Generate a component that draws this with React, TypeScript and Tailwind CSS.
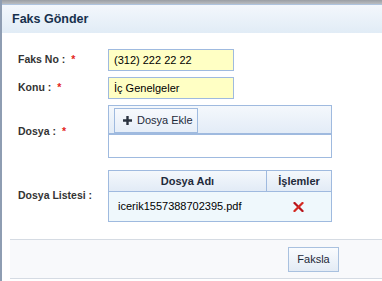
import React from "react";

const border = "border-[#9fbadf]";

function Label({ text, required }: { text: string; required?: boolean }) {
  return (
    <div className="w-[90px] shrink-0 text-[10.5px] font-bold text-[#333] flex items-center">
      <span>{text}</span>
      {required && <span className="ml-[6px] text-[#e3241b]">*</span>}
    </div>
  );
}

function TextInput({ value }: { value: string }) {
  return (
    <div
      className={`w-[126px] h-[22px] border ${border} bg-[#ffffc4] px-[5px] flex items-center text-[11px] text-black`}
    >
      {value}
    </div>
  );
}

function DeleteIcon() {
  return (
    <svg width="11" height="10" viewBox="0 0 11 10">
      <path d="M1.5 1 L9.5 9" stroke="#b8141a" strokeWidth="2.3" strokeLinecap="round" />
      <path d="M9.5 1 L1.5 9" stroke="#d42a22" strokeWidth="2.3" strokeLinecap="round" />
    </svg>
  );
}

export default function App() {
  return (
    <div
      className="w-[382px] h-[281px] bg-white flex overflow-hidden"
      style={{ fontFamily: '"Liberation Sans", Arial, sans-serif' }}
    >
      <div className="w-[2px] shrink-0 bg-[#8e9db2]" />
      <div className="flex-1 flex flex-col">
        <div className="h-[5px] bg-gradient-to-b from-[#9a9ea4] to-[#b9bdc2] border-b border-[#aec3de]" />
        <div className="h-[28px] bg-gradient-to-b from-[#f3f7fc] to-[#e1ecf6] flex items-center pl-[10px]">
          <span className="text-[12.5px] font-bold text-[#17304d]">Faks Gönder</span>
        </div>

        <div className="pl-[16px] pt-[16px] flex flex-col gap-[6px]">
          <div className="flex">
            <Label text="Faks No :" required />
            <TextInput value="(312) 222 22 22" />
          </div>
          <div className="flex">
            <Label text="Konu :" required />
            <TextInput value="İç Genelgeler" />
          </div>
          <div className="flex">
            <Label text="Dosya :" required />
            <div className={`w-[224px] border ${border}`}>
              <div className={`h-[29px] border-b-2 ${border} bg-gradient-to-b from-[#f4f8fc] to-[#e3ecf7] pl-[5px] pt-[2px]`}>
                <div className={`w-[84px] h-[25px] border ${border} bg-gradient-to-b from-[#f7f9fd] to-[#e6eef8] flex items-center gap-[5px] pl-[8px] text-[11px] text-[#1e2a3a]`}>
                  <svg width="9" height="9" viewBox="0 0 9 9">
                    <path d="M3.3 0h2.4v3.3H9v2.4H5.7V9H3.3V5.7H0V3.3h3.3z" fill="#2b3340" />
                  </svg>
                  <span>Dosya Ekle</span>
                </div>
              </div>
              <div className="h-[22px]" />
            </div>
          </div>
          <div className="flex mt-[6px]">
            <Label text="Dosya Listesi :" />
            <div className={`w-[224px] border ${border}`}>
              <div className={`h-[21px] flex border-b ${border} bg-gradient-to-b from-[#f4f8fc] to-[#e2ebf6] text-[11px] font-bold text-[#1e2a3a]`}>
                <div className={`flex-1 flex items-center justify-center border-r ${border}`}>Dosya Adı</div>
                <div className="w-[64px] flex items-center justify-center">İşlemler</div>
              </div>
              <div className="h-[29px] flex bg-[#eff8fc] text-[11px] text-black">
                <div className="flex-1 flex items-center pl-[9px]">icerik1557388702395.pdf</div>
                <div className="w-[64px] flex items-center justify-center pr-[2px]">
                  <DeleteIcon />
                </div>
              </div>
            </div>
          </div>
        </div>

        <div className="mt-[17px] ml-[8px] h-[40px] border-y border-[#d5dbe3] bg-[#f8f9fb] flex items-center justify-end pr-[43px]">
          <div className="w-[51px] h-[25px] border border-[#a9c1df] bg-gradient-to-b from-[#fafcfe] to-[#e3ebf5] flex items-center justify-center text-[11px] text-[#1e2a3a]">
            Faksla
          </div>
        </div>
      </div>
    </div>
  );
}
